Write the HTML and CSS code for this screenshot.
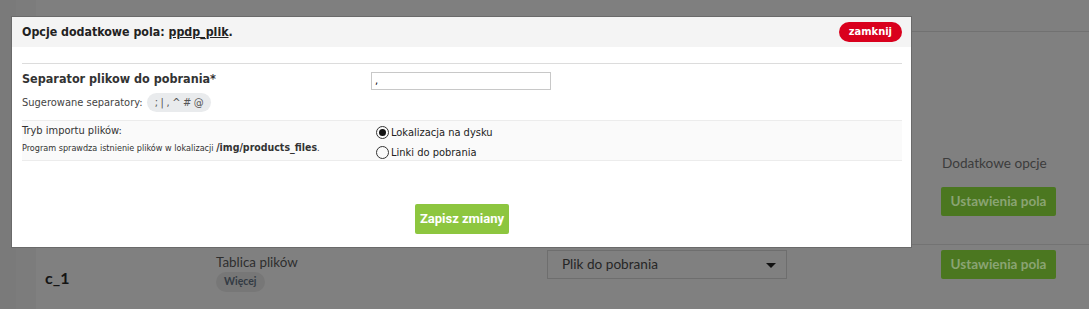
FILE: index.html
```html
<!DOCTYPE html>
<html>
<head>
    <title>Pola dodatkowe</title>
    <meta charset="utf-8">
    <link rel="stylesheet" href="styles.css">
</head>
<body>
    <div id="page">
        <div class="sidebar"></div>
        <div class="gutter"></div>
        <div class="panel">
            <div class="fields-head">
                <div class="col-code"></div>
                <div class="col-name"></div>
                <div class="col-type"></div>
                <div class="col-opts">
                    <span class="opts-title">Dodatkowe opcje</span>
                    <a class="bg-button">Ustawienia pola</a>
                </div>
            </div>
            <div class="fields-row">
                <div class="col-code"><strong>c_1</strong></div>
                <div class="col-name">
                    <span>Tablica plików</span>
                    <span class="more-pill">Więcej</span>
                </div>
                <div class="col-type">
                    <div class="fake-select">Plik do pobrania <span class="caret"></span></div>
                </div>
                <div class="col-opts">
                    <a class="bg-button">Ustawienia pola</a>
                </div>
            </div>
        </div>
    </div>

    <!-- okno opcji pola -->
    <div id="modal">
        <div class="modal-head">
            <h3>Opcje dodatkowe pola: <u>ppdp_plik</u>.</h3>
            <a class="close-pill">zamknij</a>
        </div>
        <div class="modal-body">
            <div class="opt-row">
                <div class="opt-label">
                    <b>Separator plikow do pobrania*</b>
                    <div class="hint">Sugerowane separatory: <span class="sep-pill">; | , ^ # @</span></div>
                </div>
                <div class="opt-value">
                    <input type="text" value=",">
                </div>
            </div>
            <div class="opt-row alt">
                <div class="opt-label">
                    <div>Tryb importu plików:</div>
                    <div class="small">Program sprawdza istnienie plików w lokalizacji <b>/img/products_files</b>.</div>
                </div>
                <div class="opt-value">
                    <label class="radio"><span class="dot on"></span>Lokalizacja na dysku</label>
                    <label class="radio"><span class="dot"></span>Linki do pobrania</label>
                </div>
            </div>
            <div class="actions">
                <a class="save-button">Zapisz zmiany</a>
            </div>
        </div>
    </div>
</body>
</html>
```

FILE: styles.css
```css
body {
    margin: 0;
    padding: 0;
    height: 309px;
    overflow: hidden;
    background: #7f7f7f;
    font-family: 'Lato', 'Open Sans', sans-serif;
}

#page {
    display: flex;
    height: 309px;
}

.sidebar {
    width: 16px;
    background: #7a7a7a;
}

.gutter {
    width: 20px;
    background: #7c7c7c;
}

.panel {
    flex: 1;
    margin-top: 31px;
    border-top: 1px solid #717171;
    background: #808080;
}

.fields-head, .fields-row {
    display: flex;
}

.fields-head {
    height: 212px;
    align-items: flex-end;
    border-bottom: 1px solid #737373;
}

.col-code { width: 180px; padding-left: 9px; box-sizing: border-box; }
.col-name { width: 331px; }
.col-type { width: 394px; }
.col-opts { flex: 1; display: flex; flex-direction: column; align-items: flex-start; }

.fields-head .col-opts {
    padding-bottom: 28px;
}

.opts-title {
    font-size: 13.6px;
    color: #3c3c3c;
    margin-bottom: 16px;
    margin-left: 1px;
}

.bg-button {
    display: inline-block;
    width: 115px;
    height: 29px;
    line-height: 29px;
    text-align: center;
    background: #4b7720;
    color: #8aa473;
    font-weight: bold;
    font-size: 13.5px;
    border-radius: 2px;
}

.fields-row {
    padding-top: 5px;
}

.fields-row .col-code {
    padding-top: 18px;
    font-size: 16px;
    color: #141414;
}

.fields-row .col-name {
    display: flex;
    flex-direction: column;
    align-items: flex-start;
    font-size: 13.4px;
    color: #2e2e2e;
    padding-top: 4px;
}

.more-pill {
    margin-top: 2px;
    padding: 3px 8px 5px;
    background: #777777;
    border-radius: 10px;
    font-size: 10.5px;
    font-weight: bold;
    color: #333b44;
}

.fake-select {
    position: relative;
    width: 240px;
    height: 29px;
    box-sizing: border-box;
    border: 1px solid #6e6e6e;
    padding-left: 14px;
    line-height: 27px;
    font-size: 13.6px;
    color: #262626;
}

.caret {
    position: absolute;
    right: 10px;
    top: 12px;
    border-left: 5px solid transparent;
    border-right: 5px solid transparent;
    border-top: 5px solid #111;
}

/* modal */
#modal {
    position: absolute;
    left: 11px;
    top: 16px;
    width: 901px;
    height: 232px;
    box-sizing: border-box;
    background: #fff;
    border: 1px solid #6a6a6a;
    font-family: 'DejaVu Sans Condensed', 'DejaVu Sans', sans-serif;
    color: #333;
}

.modal-head {
    display: flex;
    align-items: center;
    justify-content: space-between;
    height: 30px;
    background: #f4f4f4;
    padding: 0 9px 0 10px;
}

.modal-head h3 {
    margin: 0;
    font-size: 12.3px;
    color: #222;
}

.close-pill {
    background: #d9001d;
    color: #fff;
    font-weight: bold;
    font-size: 11px;
    padding: 3px 10px 4px;
    border-radius: 10px;
}

.modal-body {
    padding: 16px 9px 0 10px;
}

.opt-row {
    display: flex;
    border-top: 1px solid #dcdcdc;
}

.opt-row.alt {
    height: 41px;
    box-sizing: border-box;
    background: #fafafa;
    border-bottom: 1px solid #ececec;
    border-top-color: #ececec;
}

.opt-label {
    width: 349px;
    font-size: 11px;
}

.opt-row:first-child .opt-label {
    padding-top: 7px;
}

.opt-label b {
    font-size: 12.5px;
    display: block;
    color: #333;
}

.hint {
    margin-top: 7px;
    color: #444;
}

.sep-pill {
    display: inline-block;
    margin-left: 1px;
    padding: 3px 8px;
    background: #e9ebed;
    border-radius: 10px;
    color: #555;
    font-size: 11px;
    letter-spacing: -0.3px;
}

.opt-row:first-child {
    height: 56px;
}

.opt-row:first-child .opt-value {
    padding-top: 5px;
}

.opt-value input {
    width: 180px;
    height: 18px;
    box-sizing: border-box;
    border: 1px solid #c8c8c8;
    font-size: 11px;
    padding: 0 3px;
    font-family: inherit;
}

.opt-row.alt .opt-label {
    padding-top: 3px;
}

.small {
    font-size: 9px;
    margin-top: 4px;
    color: #333;
}

.small b {
    display: inline;
    font-size: 10.5px;
}

.opt-row.alt .opt-value {
    padding-top: 1px;
    padding-left: 5px;
}

.radio {
    display: flex;
    align-items: center;
    height: 20px;
    font-size: 11px;
    color: #222;
}

.dot {
    width: 11px;
    height: 11px;
    border: 1px solid #333;
    border-radius: 50%;
    box-sizing: content-box;
    margin-right: 2px;
    display: flex;
    align-items: center;
    justify-content: center;
}

.dot.on::after {
    content: "";
    width: 7px;
    height: 7px;
    border-radius: 50%;
    background: #111;
}

.actions {
    display: flex;
    justify-content: center;
    padding-top: 43px;
}

.save-button {
    display: inline-block;
    width: 94px;
    height: 30px;
    line-height: 30px;
    text-align: center;
    background: #8dc63f;
    color: #fff;
    font-family: 'Roboto', sans-serif;
    font-weight: bold;
    font-size: 13px;
    border-radius: 2px;
}
```
